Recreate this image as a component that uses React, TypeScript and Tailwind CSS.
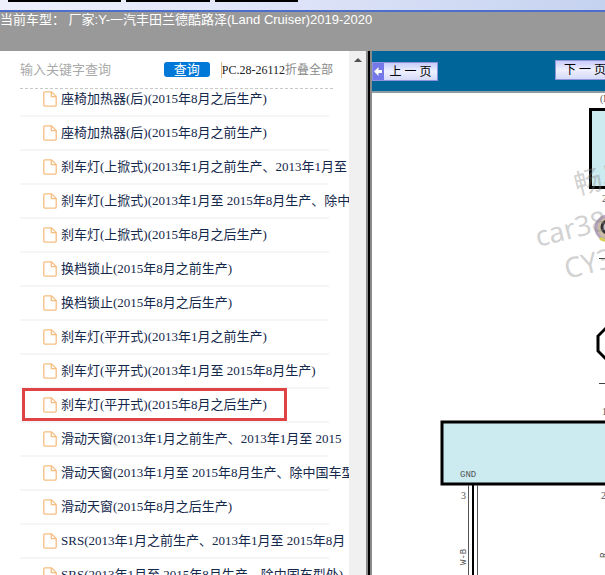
const items = [
  "座椅加热器(后)(2015年8月之后生产)",
  "座椅加热器(后)(2015年8月之前生产)",
  "刹车灯(上掀式)(2013年1月之前生产、2013年1月至",
  "刹车灯(上掀式)(2013年1月至 2015年8月生产、除中国",
  "刹车灯(上掀式)(2015年8月之后生产)",
  "换档锁止(2015年8月之前生产)",
  "换档锁止(2015年8月之后生产)",
  "刹车灯(平开式)(2013年1月之前生产)",
  "刹车灯(平开式)(2013年1月至 2015年8月生产)",
  "刹车灯(平开式)(2015年8月之后生产)",
  "滑动天窗(2013年1月之前生产、2013年1月至 2015",
  "滑动天窗(2013年1月至 2015年8月生产、除中国车型",
  "滑动天窗(2015年8月之后生产)",
  "SRS(2013年1月之前生产、2013年1月至 2015年8月",
  "SRS(2013年1月至 2015年8月生产、除中国车型处)",
];

const highlighted = 9;

function PageIcon() {
  return (
    <svg className="h-4 w-[14px] shrink-0" viewBox="0 0 14 16" fill="none" stroke="#f6bd80" strokeWidth="1.3" aria-hidden="true">
      <path d="M2 .8H8.6L13.2 5.4V14Q13.2 15.2 12 15.2H2Q.8 15.2 .8 14V2Q.8 .8 2 .8Z" />
      <path d="M8.3 1V5.7H13" />
    </svg>
  );
}

function TopStrip() {
  return (
    <div className="h-3 shrink-0 border-b-2 border-[#4d6fcb] bg-linear-to-r from-[#eef1fc] via-[#dde3f8] to-[#c5d2ef]">
      <div className="flex gap-[5px] pl-2">
        <span className="h-[2px] w-[113px] bg-black" />
        <span className="h-[2px] w-[84px] bg-black" />
        <span className="h-[2px] w-[83px] bg-black" />
      </div>
    </div>
  );
}

function Sidebar() {
  return (
    <aside className="flex w-[366px] shrink-0">
      <div className="flex min-w-0 flex-1 flex-col overflow-hidden">
        <form className="mr-4 ml-5 flex h-[38px] shrink-0 items-center border-b border-dashed border-[#c8c8c8]">
          <input
            aria-label="输入关键字查询"
            placeholder="输入关键字查询"
            className="w-36 text-[13px] text-[#333] outline-none placeholder:text-[#aaa]"
          />
          <button type="button" className="h-[15px] w-[46px] rounded-[3px] bg-[#0078d7] text-[13px] leading-[15px] text-white">
            查询
          </button>
          <div className="ml-[11px] flex items-center text-xs leading-4 whitespace-nowrap">
            <span className="border-l border-[#e5b98a] text-[#222]">PC.28-26112</span>
            <button type="button" className="text-[#888]">折叠全部</button>
          </div>
        </form>
        <nav className="min-h-0 flex-1 overflow-hidden">
          <ul className="-mt-[6px]">
            {items.map((label, i) => (
              <li key={label} className="relative h-[34px]">
                <a href="#" className="flex h-8 items-center gap-1 pl-[43px] text-[13px] whitespace-nowrap text-[#14284b]">
                  <PageIcon />
                  <span>{label}</span>
                </a>
                <div className="mr-5 ml-5 h-[2px] bg-[#f5f5f5]" />
                {i === highlighted && (
                  <div className="absolute -top-px left-[22px] h-[33px] w-[265px] border-3 border-[#e04343]" />
                )}
              </li>
            ))}
          </ul>
        </nav>
      </div>
      <div className="flex w-[17px] shrink-0 justify-center bg-[#f0f0f0] pt-[7px]">
        <svg className="h-1 w-2" viewBox="0 0 8 4" aria-hidden="true">
          <path d="M0 4L4 0L8 4Z" fill="#505050" />
        </svg>
      </div>
    </aside>
  );
}

function Diagram() {
  return (
    <svg className="block h-[482px] w-[800px]" viewBox="372 93 800 482" fill="none">
      <g stroke="#000" strokeWidth="3">
        <rect x="590.5" y="109.5" width="160" height="78" fill="#cbebf1" />
        <rect x="442" y="422" width="400" height="62" fill="#cbebf1" />
        <path d="M609 325L598 336V351L609 362" />
      </g>
      <circle cx="608" cy="228" r="12" fill="#cbbda5" stroke="#b6a4bd" strokeWidth="3" />
      <path d="M600 238Q603 241 608 240" stroke="#d8cf52" strokeWidth="3" />
      <circle cx="608" cy="227" r="6" fill="#eee" stroke="#333" strokeWidth="3" />
      <path d="M599 258.500H620M599 383.500H620" stroke="#444" />
      <path d="M468.500 485V580M477.500 485V580" stroke="#555" />
      <path d="M473 485V580" stroke="#000" strokeWidth="2" />
      <g fill="#555" fontSize="10" fontFamily="Liberation Serif, serif">
        <text x="600" y="102">(B)</text>
        <text x="602" y="202">2</text>
        <text x="602" y="415">1</text>
        <text x="460" y="477" fontSize="9" fontFamily="Liberation Mono, monospace">GND</text>
        <text x="461" y="499">3</text>
        <text x="601" y="499">2</text>
        <text transform="translate(466 565) rotate(-90)" fontSize="9" fontFamily="Liberation Mono, monospace">W-B</text>
        <text transform="translate(606 558) rotate(-90)" fontSize="9" fontFamily="Liberation Mono, monospace">R</text>
      </g>
      <g fill="#888" fillOpacity="0.4" fontSize="28" fontFamily="Noto Sans, Noto Sans CJK SC, sans-serif">
        <text transform="translate(577 195) rotate(-14)">畅易</text>
        <text transform="translate(538 247) rotate(-14)">car388</text>
        <text transform="translate(567 279) rotate(-14)">CY388</text>
      </g>
    </svg>
  );
}

const pageButton =
  "flex items-center overflow-hidden border border-[#8e94dc] bg-linear-to-b from-[#c9ccf8] via-[#eef0ff] to-[#d5daf8] text-xs text-black whitespace-pre";

function Viewer() {
  return (
    <main className="flex min-w-0 flex-1 flex-col overflow-hidden border-l-2 border-[#8b8b8b] bg-white">
      <div className="flex h-[42px] shrink-0 items-start justify-between border-b-2 border-[#8f9ca3] bg-[#006699] pt-[9px]">
        <button type="button" className={`${pageButton} mt-[2px] h-[19px] w-[66px] shrink-0`}>
          <svg className="h-[17px] w-[11px] bg-[#7478e8]" viewBox="0 0 11 17" aria-hidden="true">
            <path d="M1 8.500L5.500 4V7H9V10H5.500V13Z" fill="#fff" />
          </svg>
          <span className="flex-1 text-center">上 一 页</span>
        </button>
        <div className="flex w-[50px] shrink-0">
          <button type="button" className={`${pageButton} h-5 w-[66px] shrink-0`}>
            <span className="pl-2">下 一 页</span>
          </button>
        </div>
      </div>
      <div className="min-h-0 flex-1 overflow-hidden">
        <Diagram />
      </div>
    </main>
  );
}

export default function App() {
  return (
    <div className="flex h-screen flex-col overflow-hidden bg-white font-['Liberation_Serif','Noto_Sans_CJK_SC',serif]">
      <TopStrip />
      <header className="h-[39px] shrink-0 overflow-hidden bg-[#999] font-['Liberation_Sans','Noto_Sans_CJK_SC',sans-serif] text-[13px] leading-4 whitespace-nowrap text-white">
        <h1>当前车型： 厂家:Y-一汽丰田兰德酷路泽(Land Cruiser)2019-2020</h1>
      </header>
      <div className="flex min-h-0 flex-1">
        <Sidebar />
        <div className="w-1 shrink-0 border-l-2 border-[#8b8b8b] bg-black" />
        <Viewer />
      </div>
    </div>
  );
}
